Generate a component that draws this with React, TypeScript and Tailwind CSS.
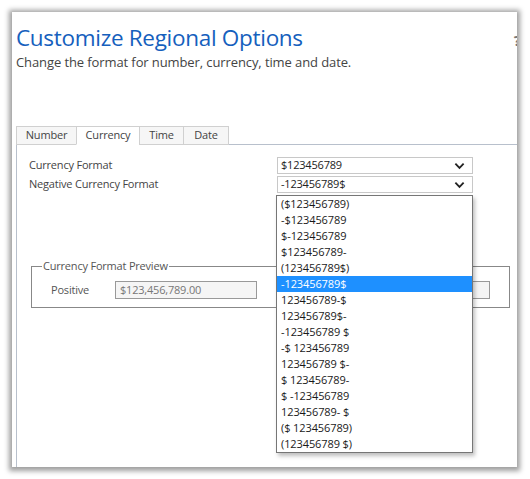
import React from 'react';

const negativeFormats = [
  '($123456789)',
  '-$123456789',
  '$-123456789',
  '$123456789-',
  '(123456789$)',
  '-123456789$',
  '123456789-$',
  '123456789$-',
  '-123456789 $',
  '-$ 123456789',
  '123456789 $-',
  '$ 123456789-',
  '$ -123456789',
  '123456789- $',
  '($ 123456789)',
  '(123456789 $)',
];

const Chevron = () => (
  <svg viewBox="0 0 12 8" className="w-[11px] h-[8px]" fill="none" stroke="#222" strokeWidth={2}>
    <path d="M1.5 1.5L6 6l4.5-4.5" />
  </svg>
);

const Select = ({ value }: { value: string }) => (
  <div className="w-[196px] h-[17px] border border-[#c8c8c8] bg-white flex items-center justify-between pl-[3px] pr-[7px] text-[11px] text-[#222] tracking-[-0.2px]">
    <span>{value}</span>
    <Chevron />
  </div>
);

const tabs = ['Number', 'Currency', 'Time', 'Date'];

export default function App() {
  return (
    <div
      className="w-[530px] h-[479px] bg-white pt-[12px] pl-[12px]"
      style={{ fontFamily: '"Open Sans", "Noto Sans", sans-serif' }}
    >
      <div className="relative w-[505px] h-[455px] bg-white shadow-[0_1px_5px_3px_rgba(0,0,0,0.38)] overflow-hidden">
        <span className="absolute right-[-4px] top-[17px] text-[15px] font-bold text-[#777]">?</span>

        <div className="pl-[4px] pt-[10px]">
          <h1 className="text-[22.5px] leading-[32px] text-[#1560bd] tracking-[-0.3px]">Customize Regional Options</h1>
          <p className="text-[13px] leading-[16px] text-[#444] tracking-[-0.1px]">
            Change the format for number, currency, time and date.
          </p>
        </div>

        <div className="ml-[4px] mt-[56px]">
          <div className="flex text-[11px] text-[#444] tracking-[-0.2px]">
            {tabs.map((t) => (
              <div
                key={t}
                className={`h-[19px] flex items-center justify-center border border-[#d0d0d0] -mr-px ${
                  t === 'Currency' ? 'bg-white border-b-white' : 'bg-[#f6f6f6]'
                } ${t === 'Number' ? 'w-[61px]' : t === 'Currency' ? 'w-[64px]' : t === 'Time' ? 'w-[45px]' : 'w-[46px]'}`}
              >
                {t}
              </div>
            ))}
          </div>

          <div className="h-[323px] -mt-px border-t border-l border-[#b8c0cc] pl-[12px] pt-[12px] text-[11px] text-[#444] tracking-[-0.2px]">
            <div className="flex items-center h-[17px]">
              <span className="w-[248px]">Currency Format</span>
              <Select value="$123456789" />
            </div>
            <div className="flex items-center h-[17px] mt-[2px]">
              <span className="w-[248px]">Negative Currency Format</span>
              <Select value="-123456789$" />
            </div>

            <fieldset className="mt-[67px] ml-[2px] w-[479px] h-[48px] border border-[#888] pl-[19px] pr-[19px]">
              <legend className="px-[1px] -ml-[9px] text-[11px] text-[#555] leading-[12px]">Currency Format Preview</legend>
              <div className="flex items-center mt-[9px]">
                <span className="w-[64px] text-[#555]">Positive</span>
                <div className="w-[142px] h-[18px] border border-[#999] bg-[#f5f5f5] text-[#777] pl-[4px] flex items-center">
                  $123,456,789.00
                </div>
                <span className="ml-[26px] w-[64px] text-[#555]">Negative</span>
                <div className="flex-1 h-[18px] border border-[#999] bg-[#f5f5f5] text-[#777] pl-[4px] flex items-center">
                  -123,456,789.00$
                </div>
              </div>
            </fieldset>
          </div>
        </div>

        <div className="absolute left-[264px] top-[183px] w-[197px] border border-[#767676] bg-white shadow-[2px_3px_4px_rgba(0,0,0,0.25)] text-[11px] text-[#1a1a1a] tracking-[-0.1px]">
          {negativeFormats.map((f) => (
            <div
              key={f}
              className={`h-[16px] leading-[16px] pl-[4px] ${f === '-123456789$' ? 'bg-[#1e90ff] text-white' : ''}`}
            >
              {f}
            </div>
          ))}
        </div>
      </div>
    </div>
  );
}
